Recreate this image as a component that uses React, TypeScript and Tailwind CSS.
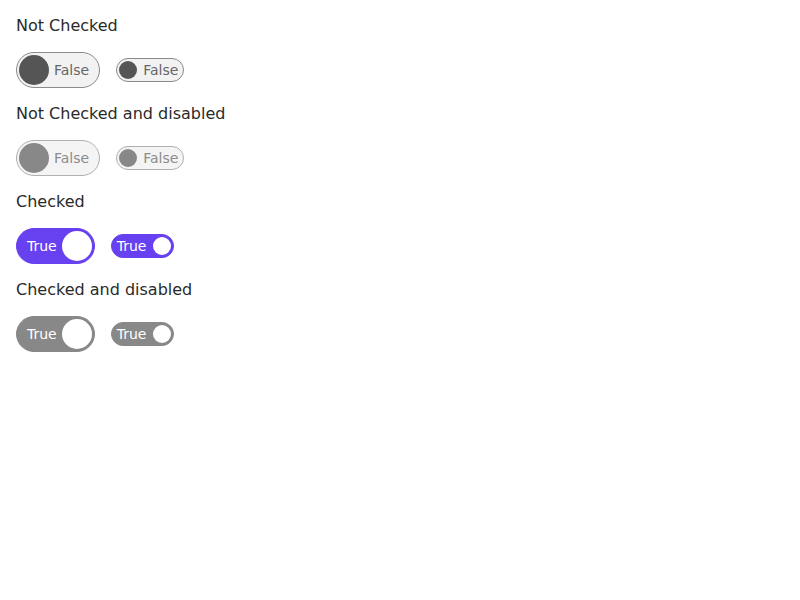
import React from "react";

type SwitchProps = { checked: boolean; disabled?: boolean; size: "lg" | "sm" };

function Switch({ checked, disabled, size }: SwitchProps) {
  const lg = size === "lg";
  const track = checked
    ? disabled
      ? "bg-[#888888] border-[#888888]"
      : "bg-[#6741f0] border-[#6741f0]"
    : disabled
      ? "bg-[#f4f4f4] border-[#b0b0b0]"
      : "bg-[#f2f2f2] border-[#8a8a8a]";
  const knob = checked ? "bg-white" : disabled ? "bg-[#888888]" : "bg-[#555555]";
  const text = checked ? "text-white" : disabled ? "text-[#8c8c8c]" : "text-[#666666]";
  const knobEl = <span className={`${lg ? "w-[30px] h-[30px]" : "w-[18px] h-[18px]"} rounded-full shrink-0 ${knob}`} />;
  const label = (
    <span
      className={`text-[14px] leading-none ${text} ${
        checked ? (lg ? "ml-[8px] mr-[5px]" : "ml-[3px] mr-[6px]") : lg ? "ml-[5px] mr-[8px]" : "ml-[6px] mr-[3px]"
      }`}
    >
      {checked ? "True" : "False"}
    </span>
  );
  return (
    <span className={`inline-flex items-center border rounded-full p-[2px] ${track} ${lg ? "h-[36px]" : "h-[24px]"}`}>
      {checked ? (
        <>
          {label}
          {knobEl}
        </>
      ) : (
        <>
          {knobEl}
          {label}
        </>
      )}
    </span>
  );
}

function Section({ title, checked, disabled }: { title: string; checked: boolean; disabled?: boolean }) {
  return (
    <div className="flex flex-col gap-[16px] mb-[16px]">
      <div className="text-[16px] leading-[20px] text-[#2a2a2a]">{title}</div>
      <div className="flex items-center gap-[16px]">
        <Switch checked={checked} disabled={disabled} size="lg" />
        <Switch checked={checked} disabled={disabled} size="sm" />
      </div>
    </div>
  );
}

export default function App() {
  return (
    <div className="min-h-[600px] bg-white p-[16px]" style={{ fontFamily: '"DejaVu Sans", sans-serif' }}>
      <Section title="Not Checked" checked={false} />
      <Section title="Not Checked and disabled" checked={false} disabled />
      <Section title="Checked" checked />
      <Section title="Checked and disabled" checked disabled />
    </div>
  );
}
